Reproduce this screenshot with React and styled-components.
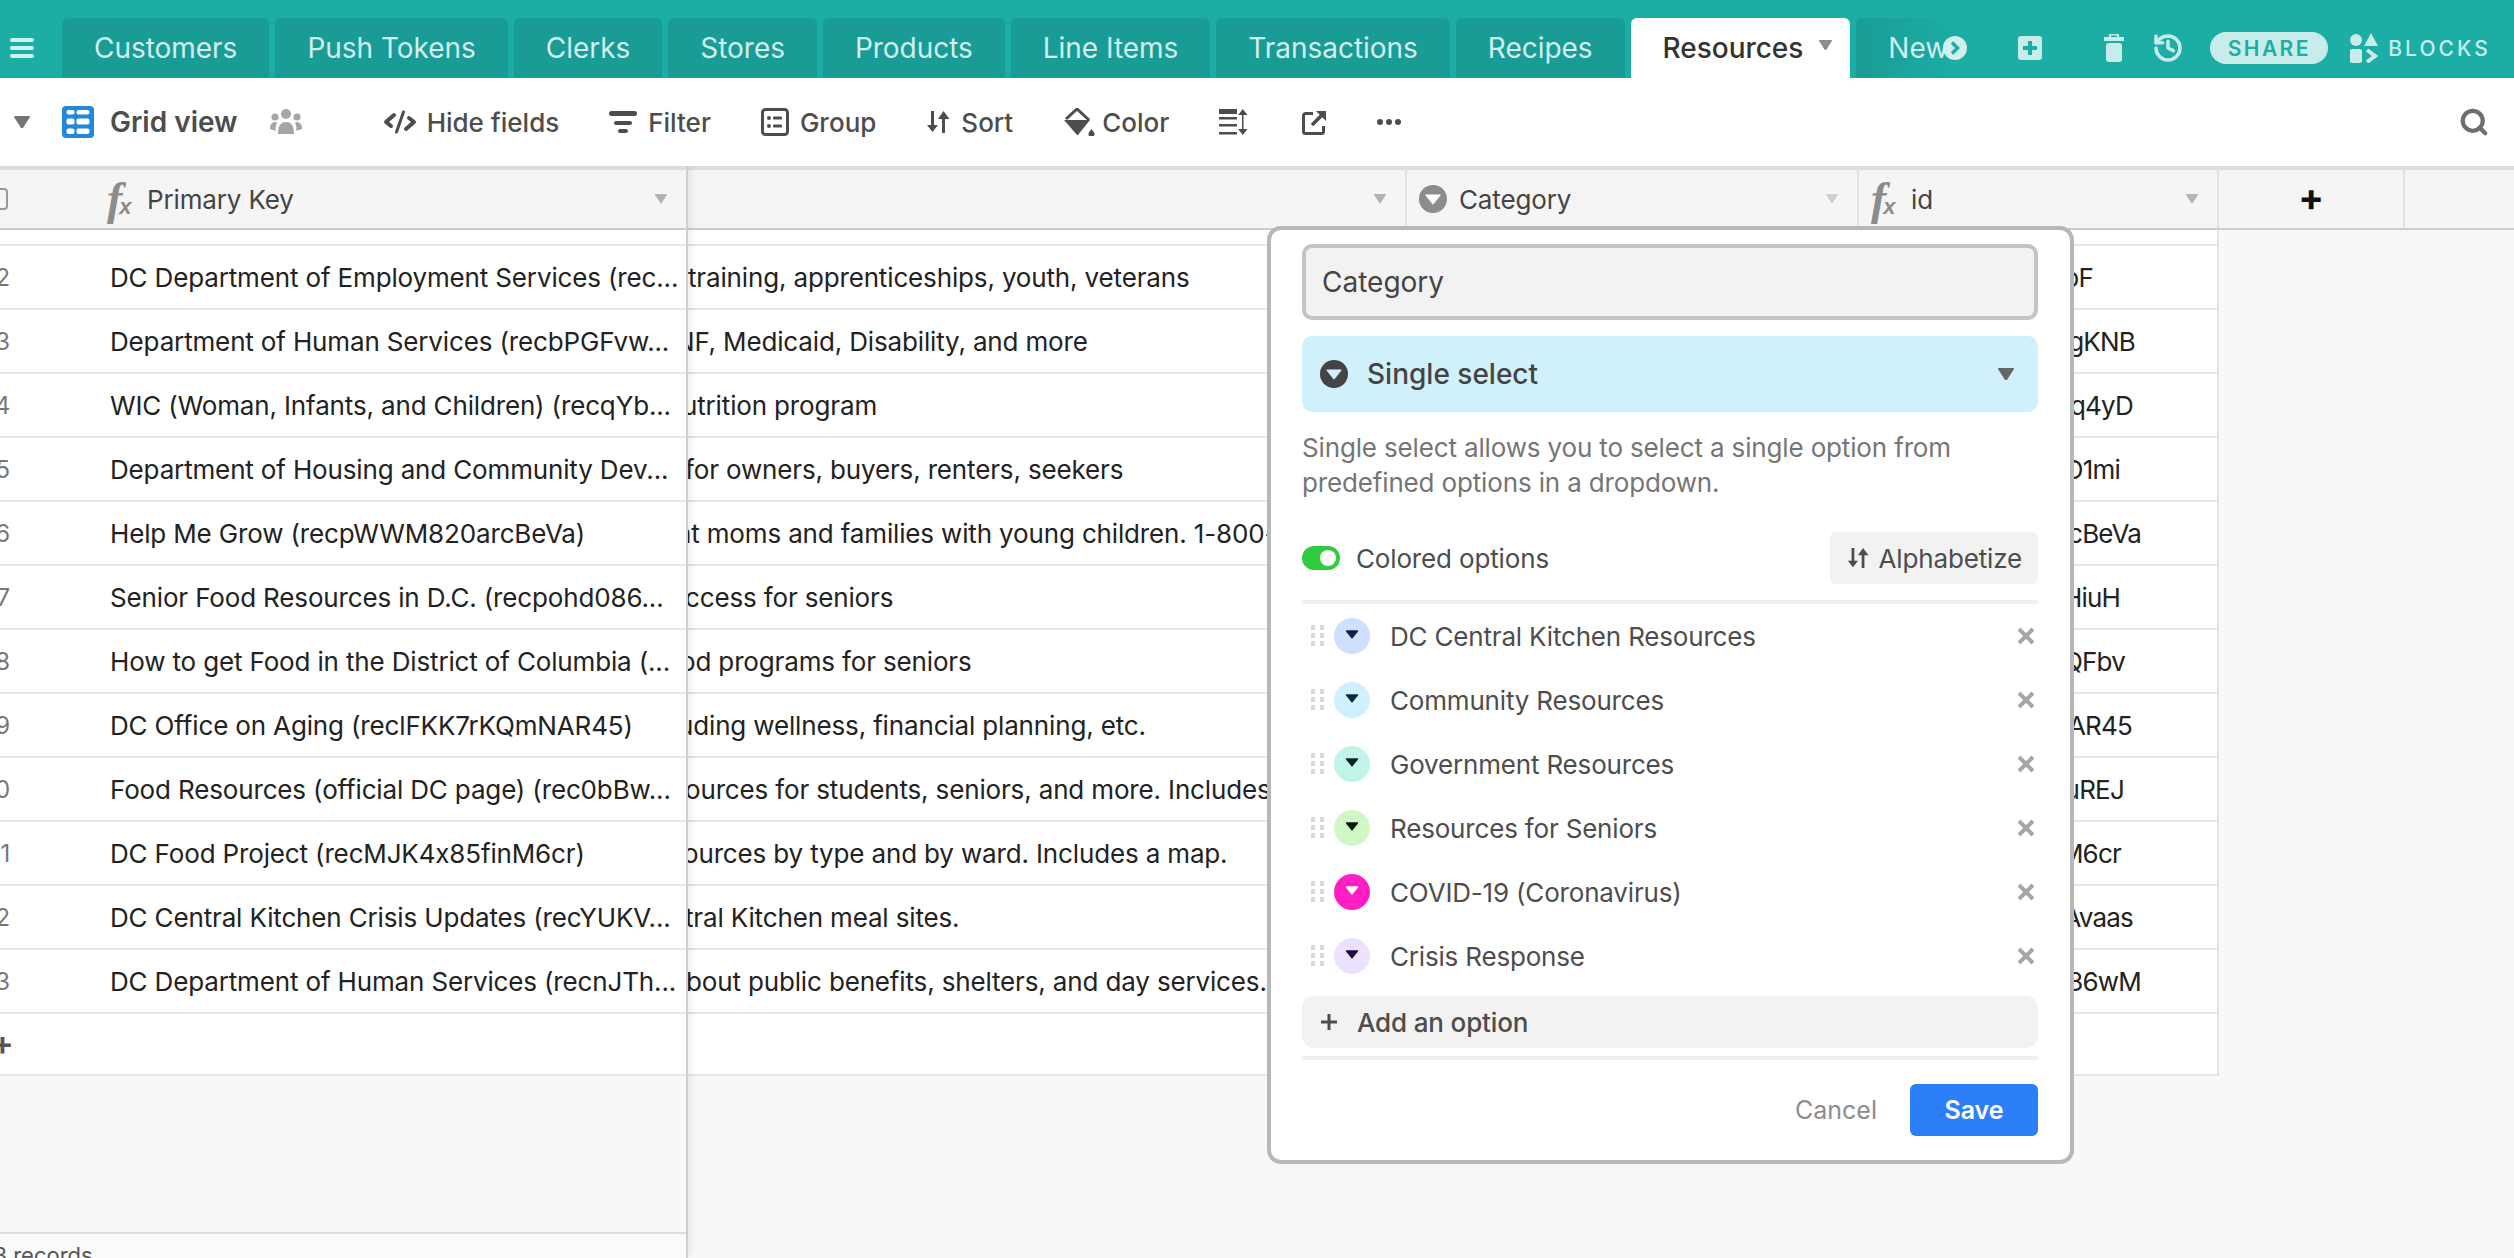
import React from "react";
import styled, { createGlobalStyle } from "styled-components";
import { History, Search } from "lucide-react";

const GlobalStyle = createGlobalStyle`
  html, body { margin: 0; padding: 0; }
  body {
    width: 2514px;
    height: 1258px;
    overflow: hidden;
    background: #fff;
    font-family: Inter, "Liberation Sans", sans-serif;
    color: #333;
  }
  * { box-sizing: border-box; }
`;

const tabs = ["Customers", "Push Tokens", "Clerks", "Stores", "Products", "Line Items", "Transactions", "Recipes"];

const rows = [
  { n: 12, name: "DC Department of Employment Services (rec...", text: "training, apprenticeships, youth, veterans", shift: 0, id: "bF", end: 2095 },
  { n: 13, name: "Department of Human Services (recbPGFvw...", text: "NF, Medicaid, Disability, and more", shift: -13, id: "gKNB", end: 2137 },
  { n: 14, name: "WIC (Woman, Infants, and Children) (recqYb...", text: "utrition program", shift: -6, id: "q4yD", end: 2135 },
  { n: 15, name: "Department of Housing and Community Dev...", text: "for owners, buyers, renters, seekers", shift: -3, id: "D1mi", end: 2122 },
  { n: 16, name: "Help Me Grow (recpWWM820arcBeVa)", text: "nt moms and families with young children. 1-800-", shift: -12, id: "cBeVa", end: 2143 },
  { n: 17, name: "Senior Food Resources in D.C. (recpohd086...", text: "ccess for seniors", shift: -3, id: "HiuH", end: 2122 },
  { n: 18, name: "How to get Food in the District of Columbia (...", text: "od programs for seniors", shift: -8, id: "QFbv", end: 2127 },
  { n: 19, name: "DC Office on Aging (reclFKK7rKQmNAR45)", text: "uding wellness, financial planning, etc.", shift: -10, id: "AR45", end: 2134 },
  { n: 20, name: "Food Resources (official DC page) (rec0bBw...", text: "ources for students, seniors, and more. Includes", shift: -3, id: "uREJ", end: 2126 },
  { n: 21, name: "DC Food Project (recMJK4x85finM6cr)", text: "ources by type and by ward. Includes a map.", shift: -5, id: "M6cr", end: 2123 },
  { n: 22, name: "DC Central Kitchen Crisis Updates (recYUKV...", text: "tral Kitchen meal sites.", shift: -3, id: "Avaas", end: 2135 },
  { n: 23, name: "DC Department of Human Services (recnJTh...", text: "bout public benefits, shelters, and day services.", shift: -2, id: "36wM", end: 2143 },
];

const options = [
  { label: "DC Central Kitchen Resources", bg: "#cfdfff", fg: "#102046" },
  { label: "Community Resources", bg: "#d0f0fd", fg: "#0b2a3c" },
  { label: "Government Resources", bg: "#c2f5e9", fg: "#012524" },
  { label: "Resources for Seniors", bg: "#d1f7c4", fg: "#0b1d05" },
  { label: "COVID-19 (Coronavirus)", bg: "#ff1fc4", fg: "#ffffff" },
  { label: "Crisis Response", bg: "#ede2fe", fg: "#280b42" },
];

function Caret({ size = 12, color = "#777" }) {
  return (
    <svg width={size} height={size * 0.8} viewBox="0 0 10 8" style={{ flex: "none" }}>
      <path d="M0.5 0.5h9L5 7.5z" fill={color} stroke={color} strokeLinejoin="round" />
    </svg>
  );
}

function SelectDot({ size = 28, bg = "#8c8c8c", fg = "#fff", tri = 0.5 }) {
  const a = 18 - 18 * tri;
  const b = 18 + 18 * tri;
  return (
    <svg width={size} height={size} viewBox="0 0 36 36" style={{ flex: "none" }}>
      <circle cx="18" cy="18" r="18" fill={bg} />
      <path d={`M${a} 13H${b}L18 ${13 + 18 * tri * 1.25}z`} fill={fg} stroke={fg} strokeWidth="1.5" strokeLinejoin="round" />
    </svg>
  );
}

function GridIcon() {
  return (
    <svg width="32" height="32" viewBox="0 0 32 32">
      <rect width="32" height="32" rx="4" fill="#2088dd" />
      <g fill="#fff">
        <rect x="4.5" y="4" width="8" height="4.5" rx="2" />
        <rect x="14.5" y="4" width="13" height="4.5" rx="2" />
        <rect x="4.5" y="12.5" width="8" height="6" rx="2" />
        <rect x="14.5" y="12.5" width="13" height="6" rx="2" />
        <rect x="4.5" y="22.5" width="8" height="5.5" rx="2" />
        <rect x="14.5" y="22.5" width="13" height="5.5" rx="2" />
      </g>
    </svg>
  );
}

function PeopleIcon() {
  return (
    <svg width="32" height="26" viewBox="0 0 32 26" fill="#a6a6a6">
      <circle cx="16" cy="5" r="5" />
      <circle cx="5" cy="8" r="3.6" />
      <circle cx="27" cy="8" r="3.6" />
      <path d="M8 25c0-9 3-12 8-12s8 3 8 12z" />
      <path d="M0 20c0-5 2-7 6-7l1 .5C6 16 5.500 18 5.500 22z" />
      <path d="M32 20c0-5-2-7-6-7l-1 .5c1 2.500 1.500 4.500 1.500 8.500z" />
    </svg>
  );
}

function HideIcon() {
  return (
    <svg width="34" height="24" viewBox="0 0 34 24" fill="none" stroke="#4d4d4d" strokeLinecap="round" strokeLinejoin="round">
      <path d="M11 5 3 12l5 4" strokeWidth="4" />
      <path d="M23 19l8-7-5-4" strokeWidth="4" />
      <path d="M20.500 2 13.500 22" strokeWidth="3" />
    </svg>
  );
}

function FilterIcon() {
  return (
    <svg width="28" height="22" viewBox="0 0 28 22" fill="#4d4d4d">
      <rect width="28" height="5" rx="2.5" />
      <rect x="5" y="10" width="18" height="4" rx="2" />
      <rect x="9" y="18" width="10" height="4" rx="2" />
    </svg>
  );
}

function GroupIcon() {
  return (
    <svg width="28" height="28" viewBox="0 0 28 28" fill="#4d4d4d">
      <rect x="1.500" y="1.500" width="25" height="25" rx="3" fill="none" stroke="#4d4d4d" strokeWidth="3" />
      <circle cx="8" cy="10" r="2" />
      <circle cx="8" cy="18" r="2" />
      <rect x="12" y="8.500" width="9" height="3" rx="1" />
      <rect x="12" y="16.500" width="9" height="3" rx="1" />
    </svg>
  );
}

function SortIcon() {
  return (
    <svg width="24" height="24" viewBox="0 0 24 24" fill="#4d4d4d">
      <path d="M5 1h3v14h4l-5.500 7L1 15h4z" />
      <path d="M16 23h3V9h4.500L17.500 1 12 9h4z" />
    </svg>
  );
}

function ColorIcon() {
  return (
    <svg width="32" height="28" viewBox="0 0 32 28" fill="#4d4d4d">
      <path d="M1 12h26L14.500 27.500z" />
      <path d="M3 11 14 1l12 11" fill="none" stroke="#4d4d4d" strokeWidth="3" />
      <path d="M28.500 21c2 2.500 3 3.500 3 5a3 3 0 0 1-6 0c0-1.500 1-2.500 3-5z" />
    </svg>
  );
}

function RowHeightIcon() {
  return (
    <svg width="33" height="26" viewBox="0 0 33 26" fill="#4d4d4d">
      <rect width="18" height="5" />
      <rect y="8" width="18" height="2.500" />
      <rect y="15" width="18" height="2.500" />
      <rect y="23" width="18" height="2.500" />
      <path d="M23 3h1.500v20H23z" />
      <path d="M23.800 0l4.700 6h-9.400zM23.800 26l-4.700-6h9.400z" />
    </svg>
  );
}

function ShareIcon() {
  return (
    <svg width="25" height="25" viewBox="0 0 25 25" fill="none" stroke="#4d4d4d">
      <path d="M11 3.500H3.500a2 2 0 0 0-2 2v16a2 2 0 0 0 2 2h16a2 2 0 0 0 2-2V16" strokeWidth="3" />
      <path d="M10 15 20 5" strokeWidth="3.500" />
      <path d="M14 1h10v10z" fill="#4d4d4d" stroke="none" />
    </svg>
  );
}

function DotsIcon() {
  return (
    <svg width="24" height="6" viewBox="0 0 24 6" fill="#4d4d4d">
      <circle cx="3" cy="3" r="3" />
      <circle cx="12" cy="3" r="3" />
      <circle cx="21" cy="3" r="3" />
    </svg>
  );
}

function PlusBoxIcon() {
  return (
    <svg width="24" height="24" viewBox="0 0 24 24">
      <rect width="24" height="24" rx="3" fill="#c7ece9" />
      <path d="M10 5h4v5h5v4h-5v5h-4v-5H5v-4h5z" fill="#1cada5" />
    </svg>
  );
}

function TrashIcon() {
  return (
    <svg width="20" height="28" viewBox="0 0 20 28" fill="#c7ece9">
      <path d="M5 0h10v3h5v4H0V3h5zM7 1.500V3h6V1.500z" fillRule="evenodd" />
      <rect x="2" y="9" width="16" height="19" rx="3" />
    </svg>
  );
}

function BlocksIcon() {
  return (
    <svg width="28" height="30" viewBox="0 0 28 30" fill="#c7ece9">
      <circle cx="6" cy="7" r="6" />
      <path d="M21 0l7 13H14z" />
      <rect x="0" y="16" width="12" height="14" rx="2" />
      <path d="M17 17l8 6-8 6" fill="none" stroke="#c7ece9" strokeWidth="4" />
    </svg>
  );
}

function GripIcon() {
  return (
    <svg width="14" height="22" viewBox="0 0 14 22" fill="#d9d9d9">
      {[0, 8, 16].map((y) => (
        <g key={y}>
          <rect y={y} width="4" height="5" />
          <rect x="9" y={y} width="4" height="5" />
        </g>
      ))}
    </svg>
  );
}

function CloseIcon() {
  return (
    <svg width="18" height="18" viewBox="0 0 18 18" stroke="#a6a6a6" strokeWidth="4">
      <path d="M2 2l14 14M16 2 2 16" />
    </svg>
  );
}

const Page = styled.div`
  width: 2514px;
  height: 1258px;
  display: flex;
  flex-direction: column;
  overflow: hidden;
`;

const TabBar = styled.div`
  height: 78px;
  flex: none;
  display: flex;
  padding-top: 18px;
  background: #1cada5;
`;

const Burger = styled.div`
  width: 62px;
  flex: none;
  display: flex;
  flex-direction: column;
  justify-content: center;
  gap: 4px;
  padding: 0 28px 0 10px;
  span {
    height: 4px;
    border-radius: 2px;
    background: #d1efec;
  }
`;

const Tabs = styled.div`
  display: flex;
  gap: 6px;
`;

const Tab = styled.div`
  display: flex;
  align-items: center;
  height: 60px;
  padding: 0 32px;
  border-radius: 6px 6px 0 0;
  background: #1a9c96;
  color: #d1efec;
  font-size: 28px;
  letter-spacing: -0.03px;
  white-space: nowrap;
`;

const ActiveTab = styled(Tab)`
  gap: 16px;
  padding: 0 18px 0 32px;
  background: #fff;
  color: #333;
  font-weight: 500;
  svg { margin-bottom: 6px; }
`;

const FadeTab = styled(Tab)`
  position: relative;
  width: 142px;
  background: linear-gradient(to right, #1a9c96, #1cada5 70%);
  overflow: hidden;
`;

const MoreTabs = styled.span`
  position: absolute;
  left: 87px;
  top: 18px;
  width: 24px;
  height: 24px;
  border-radius: 50%;
  background: #d1efec;
  display: flex;
  align-items: center;
  justify-content: center;
`;

const BarActions = styled.div`
  display: flex;
  align-items: center;
  padding-left: 20px;
`;

const BarSlot = styled.div`
  display: flex;
  margin-left: ${(p) => p.$gap}px;
`;

const SharePill = styled.div`
  width: 118px;
  height: 32px;
  border-radius: 16px;
  margin-left: 26px;
  background: #c7ece9;
  color: #1cada5;
  display: flex;
  align-items: center;
  justify-content: center;
  font-size: 21px;
  font-weight: 600;
  letter-spacing: 2.4px;
`;

const BlocksLabel = styled.div`
  margin-left: 10px;
  color: #c7ece9;
  font-size: 21px;
  font-weight: 500;
  letter-spacing: 3px;
`;

const Toolbar = styled.div`
  height: 88px;
  flex: none;
  display: flex;
  align-items: center;
  padding: 0 25px 0 14px;
  background: #fff;
`;

const ViewName = styled.div`
  display: flex;
  align-items: center;
  font-size: 28px;
  font-weight: 600;
  color: #4d4d4d;
`;

const ViewCaret = styled.span`
  display: flex;
  margin-right: 32px;
`;

const ViewIcon = styled.span`
  display: flex;
  margin-right: 16px;
`;

const ViewPeople = styled.span`
  display: flex;
  margin-left: 32px;
  margin-right: 81px;
`;

const ToolGroup = styled.div`
  display: flex;
  align-items: center;
  gap: 50px;
`;

const ToolItem = styled.div`
  display: flex;
  align-items: center;
  gap: ${(p) => p.$gap ?? 11}px;
  font-size: 26px;
  font-weight: 500;
  color: #4d4d4d;
`;

const SearchSlot = styled.div`
  margin-left: auto;
  display: flex;
`;

const Grid = styled.div`
  flex: 1;
  min-height: 0;
  display: flex;
  background: #f8f8f8;
`;

const Frozen = styled.div`
  width: 728px;
  flex: none;
  margin-left: -40px;
  display: flex;
  flex-direction: column;
  border-right: 2px solid #cfcfcf;
  box-shadow: 5px 0 6px -2px rgba(0, 0, 0, 0.07);
  position: relative;
  z-index: 1;
`;

const Scroller = styled.div`
  flex: 1;
  min-width: 0;
  display: flex;
  flex-direction: column;
`;

const HeaderRow = styled.div`
  height: 64px;
  flex: none;
  display: flex;
  border-top: 4px solid #dcdcdc;
  border-bottom: 2px solid #cccccc;
  background: #f5f5f5;
`;

const HeaderCell = styled.div`
  width: ${(p) => p.$w}px;
  flex: none;
  display: flex;
  align-items: center;
  gap: 12px;
  padding: 0 19px 0 12px;
  border-right: 2px solid #e2e2e2;
  font-size: 26px;
  letter-spacing: -0.15px;
  color: #444;
`;

const PrimaryHeader = styled(HeaderCell)`
  width: 726px;
  padding-left: 40px;
  border-right: 0;
`;

const Checkbox = styled.span`
  width: 22px;
  height: 22px;
  margin-left: -14px;
  margin-right: 87px;
  flex: none;
  border: 2px solid #999;
  border-radius: 4px;
`;

const HeaderLabel = styled.span`
  flex: 1;
`;

const Fx = styled.span`
  flex: none;
  width: 30px;
  margin-right: -2px;
  font-family: "Liberation Serif", serif;
  font-style: italic;
  font-weight: 700;
  font-size: 46px;
  line-height: 1;
  color: #8c8c8c;
  white-space: nowrap;
  sub {
    font-size: 22px;
    vertical-align: baseline;
    font-family: "Liberation Sans", sans-serif;
    margin-left: -3px;
  }
`;

const AddColumn = styled(HeaderCell)`
  justify-content: center;
  padding: 0 0 4px;
  font-size: 38px;
  font-weight: 700;
  color: #111;
`;

const SpacerRow = styled.div`
  height: 16px;
  flex: none;
  background: #fff;
  border-bottom: 2px solid #e2e4e8;
  width: ${(p) => p.$w}px;
`;

const ScrollSpacer = styled(SpacerRow)`
  border-right: 2px solid #e2e4e8;
`;

const Row = styled.div`
  height: 64px;
  flex: none;
  display: flex;
  align-items: center;
  background: #fff;
  border-bottom: 2px solid #e2e4e8;
  font-size: 26px;
  letter-spacing: -0.15px;
  color: #222;
  white-space: nowrap;
  width: ${(p) => p.$w}px;
`;

const RowNumber = styled.span`
  width: 50px;
  flex: none;
  text-align: right;
  font-size: 24px;
  color: #777;
`;

const RowName = styled.span`
  margin-left: 100px;
`;

const NotesCell = styled.span`
  width: 719px;
  flex: none;
  overflow: hidden;
`;

const IdCell = styled.span`
  margin-left: auto;
  width: 812px;
  flex: none;
  height: 100%;
  display: flex;
  align-items: center;
  justify-content: flex-end;
  border-right: 2px solid #e2e4e8;
  letter-spacing: -0.8px;
`;

const AddRow = styled(Row)`
  height: 62px;
  padding: 0 0 4px 31px;
  font-size: 34px;
  font-weight: 600;
  color: #555;
`;

const ScrollAddRow = styled(Row)`
  height: 62px;
`;

const Filler = styled.div`
  flex: 1;
`;

const Footer = styled.div`
  height: 26px;
  flex: none;
  overflow: hidden;
  padding: 8px 0 0 20px;
  border-top: 2px solid #dedede;
  background: #fbfbfb;
  font-size: 22px;
  color: #555;
`;

const Modal = styled.div`
  position: absolute;
  z-index: 5;
  left: 1267px;
  top: 226px;
  width: 807px;
  height: 938px;
  display: flex;
  flex-direction: column;
  padding: 14px 32px 0 31px;
  background: #fff;
  border: 4px solid #b8b8b8;
  border-radius: 14px;
`;

const NameInput = styled.div`
  height: 76px;
  flex: none;
  display: flex;
  align-items: center;
  padding-left: 16px;
  border: 4px solid #c4c4c4;
  border-radius: 10px;
  background: #f2f2f2;
  font-size: 28px;
  color: #444;
`;

const TypeSelect = styled.div`
  height: 76px;
  flex: none;
  margin-top: 16px;
  display: flex;
  align-items: center;
  gap: 19px;
  padding: 0 24px 0 18px;
  border-radius: 10px;
  background: #d0f0fb;
  font-size: 28px;
  font-weight: 500;
  color: #444;
`;

const TypeLabel = styled.span`
  flex: 1;
`;

const Description = styled.p`
  margin: 18px 0 0;
  font-size: 26px;
  letter-spacing: -0.15px;
  line-height: 35px;
  color: #757575;
`;

const ToggleRow = styled.div`
  height: 52px;
  flex: none;
  margin-top: 32px;
  display: flex;
  align-items: center;
  justify-content: space-between;
  font-size: 26px;
  letter-spacing: -0.15px;
  color: #4d4d4d;
`;

const ToggleLabel = styled.div`
  display: flex;
  align-items: center;
  gap: 16px;
`;

const Switch = styled.span`
  width: 38px;
  height: 24px;
  flex: none;
  display: flex;
  align-items: center;
  justify-content: flex-end;
  padding: 4px 4px 4px 0;
  border-radius: 12px;
  background: #2fcc3f;
  &::after {
    content: "";
    width: 16px;
    height: 16px;
    border-radius: 50%;
    background: #fff;
  }
`;

const SmallButton = styled.div`
  width: 208px;
  height: 52px;
  display: flex;
  align-items: center;
  justify-content: flex-end;
  gap: 10px;
  padding-right: 16px;
  border-radius: 6px;
  background: #f2f2f2;
`;

const Divider = styled.div`
  height: 4px;
  flex: none;
  margin-top: ${(p) => p.$top}px;
  background: #f0f0f0;
`;

const OptionRow = styled.div`
  height: 64px;
  flex: none;
  display: flex;
  align-items: center;
  padding: 0 3px 0 9px;
  font-size: 26px;
  letter-spacing: -0.18px;
  color: #4d4d4d;
`;

const OptionDot = styled.span`
  display: flex;
  margin-left: 9px;
  margin-right: 20px;
`;

const OptionLabel = styled.span`
  flex: 1;
`;

const AddOption = styled.div`
  height: 52px;
  flex: none;
  margin-top: 8px;
  display: flex;
  align-items: center;
  gap: 20px;
  padding-left: 19px;
  border-radius: 12px;
  background: #f2f2f2;
  font-size: 26px;
  font-weight: 500;
  letter-spacing: -0.15px;
  color: #4d4d4d;
`;

const Actions = styled.div`
  margin-top: 24px;
  display: flex;
  align-items: center;
  justify-content: flex-end;
  gap: 33px;
  font-size: 25px;
`;

const Cancel = styled.span`
  color: #8c8c8c;
`;

const Save = styled.div`
  width: 128px;
  height: 52px;
  display: flex;
  align-items: center;
  justify-content: center;
  border-radius: 6px;
  background: #2d7ff9;
  color: #fff;
  font-weight: 600;
`;

function App() {
  return (
    <Page>
      <GlobalStyle />
      <TabBar>
        <Burger><span /><span /><span /></Burger>
        <Tabs>
          {tabs.map((t) => <Tab key={t}>{t}</Tab>)}
          <ActiveTab>Resources<Caret size={13} color="#8c8c8c" /></ActiveTab>
          <FadeTab>
            New
            <MoreTabs>
              <svg width="10" height="14" viewBox="0 0 10 14" fill="none" stroke="#1cada5" strokeWidth="3.500"><path d="M2 1.500 7.500 7 2 12.500" /></svg>
            </MoreTabs>
          </FadeTab>
        </Tabs>
        <BarActions>
          <PlusBoxIcon />
          <BarSlot $gap={62}><TrashIcon /></BarSlot>
          <BarSlot $gap={28}><History size={32} color="#c7ece9" strokeWidth={2.6} /></BarSlot>
          <SharePill>SHARE</SharePill>
          <BarSlot $gap={22}><BlocksIcon /></BarSlot>
          <BlocksLabel>BLOCKS</BlocksLabel>
        </BarActions>
      </TabBar>

      <Toolbar>
        <ViewCaret><Caret size={16} color="#757575" /></ViewCaret>
        <ViewIcon><GridIcon /></ViewIcon>
        <ViewName>Grid view</ViewName>
        <ViewPeople><PeopleIcon /></ViewPeople>
        <ToolGroup>
          <ToolItem $gap={10}><HideIcon />Hide fields</ToolItem>
          <ToolItem><FilterIcon />Filter</ToolItem>
          <ToolItem><GroupIcon />Group</ToolItem>
          <ToolItem><SortIcon />Sort</ToolItem>
          <ToolItem $gap={7}><ColorIcon />Color</ToolItem>
          <RowHeightIcon />
          <ShareIcon />
          <DotsIcon />
        </ToolGroup>
        <SearchSlot><Search size={30} color="#6e6e6e" strokeWidth={3.4} /></SearchSlot>
      </Toolbar>

      <Grid>
        <Frozen>
          <HeaderRow>
            <PrimaryHeader>
              <Checkbox />
              <Fx>f<sub>x</sub></Fx>
              <HeaderLabel>Primary Key</HeaderLabel>
              <Caret size={12} color="#b3b3b3" />
            </PrimaryHeader>
          </HeaderRow>
          <SpacerRow />
          {rows.map((r) => (
            <Row key={r.n}>
              <RowNumber>{r.n}</RowNumber>
              <RowName>{r.name}</RowName>
            </Row>
          ))}
          <AddRow>+</AddRow>
          <Filler />
          <Footer>23 records</Footer>
        </Frozen>
        <Scroller>
          <HeaderRow>
            <HeaderCell $w={719}>
              <HeaderLabel />
              <Caret size={12} color="#b3b3b3" />
            </HeaderCell>
            <HeaderCell $w={452}>
              <SelectDot />
              <HeaderLabel>Category</HeaderLabel>
              <Caret size={12} color="#d0d0d0" />
            </HeaderCell>
            <HeaderCell $w={360}>
              <Fx>f<sub>x</sub></Fx>
              <HeaderLabel>id</HeaderLabel>
              <Caret size={12} color="#b3b3b3" />
            </HeaderCell>
            <AddColumn $w={186}>+</AddColumn>
          </HeaderRow>
          <ScrollSpacer $w={1531} />
          {rows.map((r) => (
            <Row key={r.n} $w={1531}>
              <NotesCell style={{ textIndent: r.shift }}>{r.text}</NotesCell>
              <IdCell style={{ paddingRight: 2219 - r.end }}>{r.id}</IdCell>
            </Row>
          ))}
          <ScrollAddRow $w={1531}><IdCell /></ScrollAddRow>
        </Scroller>
      </Grid>

      <Modal>
        <NameInput>Category</NameInput>
        <TypeSelect>
          <SelectDot bg="#444" fg="#d0f0fb" />
          <TypeLabel>Single select</TypeLabel>
          <Caret size={16} color="#666" />
        </TypeSelect>
        <Description>
          Single select allows you to select a single option from
          <br />
          predefined options in a dropdown.
        </Description>
        <ToggleRow>
          <ToggleLabel><Switch />Colored options</ToggleLabel>
          <SmallButton>
            <svg width="22" height="22" viewBox="0 0 24 24" fill="#4d4d4d">
              <path d="M5 1h3v14h4l-5.500 7L1 15h4z" />
              <path d="M16 23h3V9h4.500L17.500 1 12 9h4z" />
            </svg>
            Alphabetize
          </SmallButton>
        </ToggleRow>
        <Divider $top={16} />
        {options.map((o) => (
          <OptionRow key={o.label}>
            <GripIcon />
            <OptionDot><SelectDot size={36} bg={o.bg} fg={o.fg} tri={0.3} /></OptionDot>
            <OptionLabel>{o.label}</OptionLabel>
            <CloseIcon />
          </OptionRow>
        ))}
        <AddOption>
          <svg width="16" height="16" viewBox="0 0 16 16" fill="#4d4d4d"><path d="M6.500 0h3v6.500H16v3H9.500V16h-3V9.500H0v-3h6.500z" /></svg>
          Add an option
        </AddOption>
        <Divider $top={8} />
        <Actions>
          <Cancel>Cancel</Cancel>
          <Save>Save</Save>
        </Actions>
      </Modal>
    </Page>
  );
}

export default App;
